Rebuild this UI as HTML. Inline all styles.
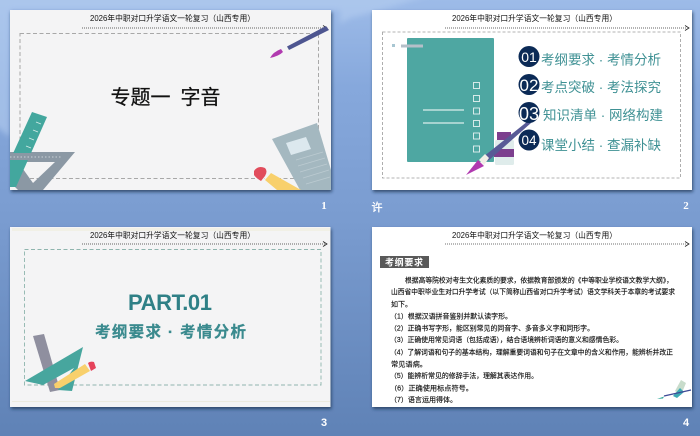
<!DOCTYPE html>
<html><head><meta charset="utf-8"><style>
html,body{margin:0;padding:0;width:700px;height:436px;overflow:hidden}
svg{display:block}
text{font-family:"Liberation Sans","Noto Sans CJK SC",sans-serif}
</style></head><body>
<svg width="700" height="436" viewBox="0 0 700 436" xmlns="http://www.w3.org/2000/svg">
<defs>
<linearGradient id="bg" x1="0" y1="0" x2="0" y2="1">
<stop offset="0" stop-color="#9dbbe8"/><stop offset=".2" stop-color="#86a8dc"/><stop offset=".5" stop-color="#7a9cd0"/><stop offset="1" stop-color="#5f82b6"/>
</linearGradient>
<filter id="sh" x="-5%" y="-5%" width="110%" height="112%"><feDropShadow dx="1" dy="2" stdDeviation="1.5" flood-color="#1d3050" flood-opacity=".75"/></filter>
<filter id="bl" x="-20%" y="-20%" width="140%" height="140%"><feGaussianBlur stdDeviation="3"/></filter>
</defs>
<rect width="700" height="436" fill="url(#bg)"/>
<path d="M-10 -10H440Q400 6 350 18L340 24L340 10H10V137L-10 122Z" fill="#b5cef0" opacity=".6" filter="url(#bl)"/>

<!-- Slide 1 -->
<rect x="10" y="10" width="321" height="180" fill="#f4f4f5" filter="url(#sh)"/>
<text x="90" y="21" font-size="8" textLength="165" lengthAdjust="spacingAndGlyphs" fill="#111">2026年中职对口升学语文一轮复习（山西专用）</text>
<path d="M82 28H326" stroke="#333" stroke-width=".8" stroke-dasharray="1 1"/><path d="M323 25.500L327 28L323 30.500" fill="none" stroke="#222" stroke-width=".8"/>
<rect x="20" y="33.500" width="298.500" height="145" fill="none" stroke="#a8a8a8" stroke-width="1" stroke-dasharray="4 2.500"/>
<text x="110.500" y="104" font-size="20" fill="#111" stroke="#111" stroke-width=".25">专题一</text><text x="180.500" y="104" font-size="20" fill="#111" stroke="#111" stroke-width=".25">字音</text>
<!-- pen -->
<path d="M287 46.500L326 26L329 30L289 50Z" fill="#4d5590"/>
<path d="M270 58Q273 52 281 49L283 52Q279 56 270 58Z" fill="#b13ab0"/>
<!-- ruler & triangle -->
<path d="M10 152H75L43 190H18L10 182ZM18 162L33 183L55 162Z" fill="#8b98a4" fill-rule="evenodd"/>
<path d="M32 112L47 117L16 187H10V160Z" fill="#43a79e"/>
<path d="M10 153L33 153L30 160H10Z" fill="#8b98a4"/>
<path d="M10 157H62" stroke="#c9d0d6" stroke-width="1" stroke-dasharray="1.500 2"/>
<path d="M36 122L41 124M33 130L38 132M29 138L34 140M26 146L31 148" stroke="#d4ece8" stroke-width=".8"/>
<!-- document -->
<path d="M272 139L317 123L331 170V190H300Z" fill="#a4b8c0"/>
<path d="M286 143L306 137L311 149L291 155Z" fill="#dce8ee"/>
<path d="M296 160L323 152M298 166L325 158M300 172L327 164M303 178L329 170M306 184L330 177" stroke="#bccbd1" stroke-width=".8"/>
<!-- pencil -->
<path d="M264 178L270 172L281 175L275 190H272Z" fill="#f4f4f5"/>
<path d="M254 171Q258 165 265 168Q268 171 265 176L261 181Q256 178 254 175Z" fill="#e14c5c"/>
<path d="M271 173L301 190H277L265 180Z" fill="#f8d06c"/>

<text x="324" y="209" font-size="11" font-weight="bold" fill="#fff" text-anchor="middle" style="font-family:'Liberation Serif',serif">1</text>

<!-- Slide 2 -->
<rect x="372" y="10" width="320" height="180" fill="#fff" filter="url(#sh)"/>
<text x="452" y="21" font-size="8" textLength="165" lengthAdjust="spacingAndGlyphs" fill="#111">2026年中职对口升学语文一轮复习（山西专用）</text>
<path d="M445 28H686" stroke="#333" stroke-width=".8" stroke-dasharray="1 1"/><path d="M685 25.500L689 28L685 30.500" fill="none" stroke="#222" stroke-width=".8"/>
<rect x="382.500" y="32" width="298" height="146" fill="none" stroke="#9a9a9a" stroke-width=".8" stroke-dasharray="3 2"/>
<rect x="407" y="38" width="87" height="124" rx="1" fill="#4ea7a2"/>
<rect x="392" y="44" width="3" height="3" fill="#a8c6d2"/><rect x="401" y="44.500" width="22" height="3" fill="#b4bfc8"/>
<path d="M423 110H464M423 123H464" stroke="#fff" stroke-width=".9"/>
<g fill="none" stroke="#e6f2f1" stroke-width=".9">
<rect x="473.500" y="82.500" width="6" height="6"/><rect x="473.500" y="95.500" width="6" height="6"/><rect x="473.500" y="108" width="6" height="6"/><rect x="473.500" y="120.500" width="6" height="6"/><rect x="473.500" y="133" width="6" height="6"/><rect x="473.500" y="146" width="6" height="6"/>
</g>
<!-- bottle -->
<rect x="497" y="132" width="14" height="8" fill="#7c3f8e"/>
<rect x="495" y="140" width="19" height="25" rx="1.500" fill="#dfeceb"/>
<rect x="494" y="149" width="20" height="8" fill="#7c3f8e"/>
<path d="M483 157L528 121L531 123L488 161Z" fill="#585a96"/>
<path d="M466 175L478 160L484 166Z" fill="#b13ab0"/>
<path d="M479 160L485 154L489 158L484 165Z" fill="#f1efe6"/>
<g fill="#0b2a56"><circle cx="529" cy="56.500" r="10.500"/><circle cx="529" cy="84.500" r="10.500"/><circle cx="529" cy="112.500" r="10.500"/><circle cx="529" cy="140" r="10.500"/></g>
<g fill="#fff" text-anchor="middle"><text x="529" y="62" font-size="14">01</text><text x="529" y="91" font-size="17">02</text><text x="529" y="120" font-size="18">03</text><text x="529" y="145" font-size="13.500">04</text></g>
<g fill="#3f9194" font-size="13.500">
<text x="541" y="64.500" textLength="120">考纲要求 · 考情分析</text>
<text x="541" y="92" textLength="120">考点突破 · 考法探究</text>
<text x="543" y="120" textLength="120">知识清单 · 网络构建</text>
<text x="541" y="150" textLength="120">课堂小结 · 查漏补缺</text>
</g>
<text x="377" y="211" font-size="11" fill="#fff" stroke="#fff" stroke-width=".3" text-anchor="middle">许</text>
<text x="686" y="209" font-size="11" font-weight="bold" fill="#fff" text-anchor="middle" style="font-family:'Liberation Serif',serif">2</text>

<!-- Slide 3 -->
<rect x="10" y="227" width="320.500" height="180" fill="#f4f4f5" filter="url(#sh)"/>
<rect x="12" y="228" width="318" height="3" fill="#f1f0e6"/>
<rect x="12" y="401" width="318" height="1" fill="#eceadf"/>
<text x="90" y="238" font-size="8" textLength="165" lengthAdjust="spacingAndGlyphs" fill="#111">2026年中职对口升学语文一轮复习（山西专用）</text>
<path d="M82 244H326" stroke="#333" stroke-width=".8" stroke-dasharray="1 1"/><path d="M323 241.500L327 244L323 246.500" fill="none" stroke="#222" stroke-width=".8"/>
<rect x="24.500" y="249.500" width="296.500" height="135.500" fill="none" stroke="#8fb5ae" stroke-width=".9" stroke-dasharray="4 2.500"/>
<text x="128" y="310" font-size="22" font-weight="bold" fill="#2f8086" textLength="84">PART.01</text>
<text x="95" y="337" font-size="15.500" font-weight="bold" fill="#3a8a8e" stroke="#3a8a8e" stroke-width=".25" textLength="151">考纲要求 · 考情分析</text>
<path d="M33 336L44 334L60 390L50 392Z" fill="#8f8f9f"/>
<path d="M25 381L83 347L72 391L58 390L74 368L43 385Z" fill="#47a69e"/>
<path d="M54 384L85 364L90 371L60 388L55 388Z" fill="#f8d06c"/>
<path d="M88 363Q90 361 94 362L96 368L91 371Z" fill="#e5425a"/>
<text x="324" y="426" font-size="11" font-weight="bold" fill="#fff" text-anchor="middle">3</text>

<!-- Slide 4 -->
<rect x="372" y="227" width="320" height="180" fill="#fff" filter="url(#sh)"/>
<text x="452" y="238" font-size="8" textLength="165" lengthAdjust="spacingAndGlyphs" fill="#111">2026年中职对口升学语文一轮复习（山西专用）</text>
<path d="M445 244H686" stroke="#444" stroke-width=".8" stroke-dasharray="1 1"/><path d="M685 241.500L689 244L685 246.500" fill="none" stroke="#222" stroke-width=".8"/>
<rect x="380" y="256" width="49" height="12" fill="#595959"/>
<text x="385" y="265.500" font-size="9" font-weight="bold" fill="#fff" textLength="38">考纲要求</text>
<g font-size="6.900" fill="#111" stroke="#111" stroke-width=".14">
<text x="405" y="282.500" textLength="268" lengthAdjust="spacingAndGlyphs">根据高等院校对考生文化素质的要求，依据教育部颁发的《中等职业学校语文教学大纲》，</text>
<text x="391" y="294" textLength="284" lengthAdjust="spacingAndGlyphs">山西省中职毕业生对口升学考试（以下简称山西省对口升学考试）语文学科关于本章的考试要求</text>
<text x="391" y="306.500" textLength="21" lengthAdjust="spacingAndGlyphs">如下。</text>
<text x="390" y="318.500" textLength="122" lengthAdjust="spacingAndGlyphs">（1）根据汉语拼音鉴别并默认读字形。</text>
<text x="390" y="330.500" textLength="204" lengthAdjust="spacingAndGlyphs">（2）正确书写字形，能区别常见的同音字、多音多义字和同形字。</text>
<text x="390" y="342" textLength="233" lengthAdjust="spacingAndGlyphs">（3）正确使用常见词语（包括成语），结合语境辨析词语的意义和感情色彩。</text>
<text x="390" y="354.500" textLength="283" lengthAdjust="spacingAndGlyphs">（4）了解词语和句子的基本结构，理解重要词语和句子在文章中的含义和作用，能辨析并改正</text>
<text x="391" y="366.500" textLength="36" lengthAdjust="spacingAndGlyphs">常见语病。</text>
<text x="390" y="378" textLength="148" lengthAdjust="spacingAndGlyphs">（5）能辨析常见的修辞手法，理解其表达作用。</text>
<text x="390" y="390.500" textLength="83" lengthAdjust="spacingAndGlyphs">（6）正确使用标点符号。</text>
<text x="390" y="402" textLength="67" lengthAdjust="spacingAndGlyphs">（7）语言运用得体。</text>
</g>
<path d="M675 391L681 380L686 383L681 395Z" fill="#c8dccb"/>
<path d="M673 396L680 388L684 392L677 398Z" fill="#3da9b4"/>
<path d="M664 396L691 390" stroke="#3e4a96" stroke-width="1.300"/>
<path d="M657 399L664 396.500L663 398.500Z" fill="#35a89c"/>
<text x="686" y="426" font-size="11" font-weight="bold" fill="#fff" text-anchor="middle">4</text>
</svg>
</body></html>
